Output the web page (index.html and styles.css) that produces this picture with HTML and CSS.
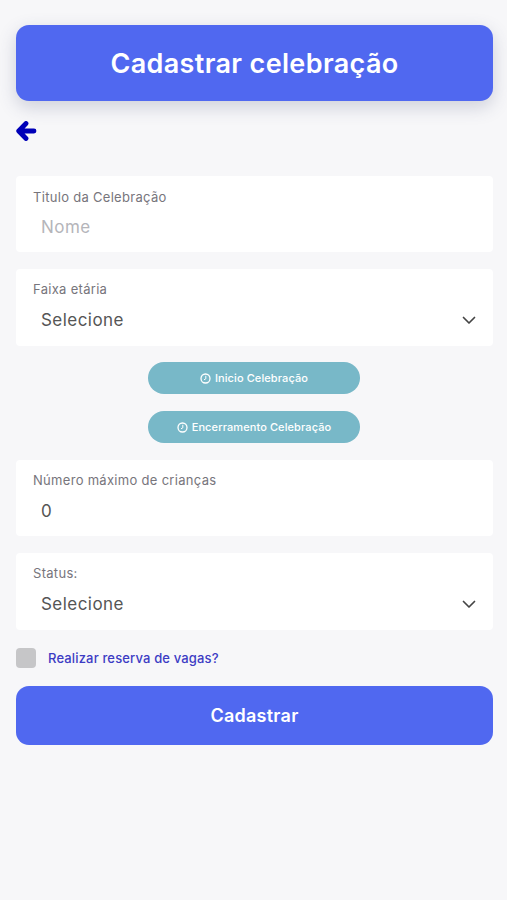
FILE: index.html
```html
<!DOCTYPE html>
<html lang="pt">
<head>
<meta charset="utf-8">
<title>Cadastrar celebração</title>
<link rel="stylesheet" href="styles.css">
</head>
<body>
<main class="page">
  <header class="header"><h1>Cadastrar celebração</h1></header>
  <div class="back">
    <svg width="21" height="20" viewBox="0 0 21 20"><path d="M10 2.500 2.700 10l7.300 7.500M4 10h14" fill="none" stroke="#0000b8" stroke-width="4.800" stroke-linecap="round" stroke-linejoin="round"/></svg>
  </div>
  <section class="field field-first">
    <span class="label">Titulo da Celebração</span>
    <span class="value placeholder">Nome</span>
  </section>
  <section class="field field-tall">
    <span class="label">Faixa etária</span>
    <div class="select"><span class="value">Selecione</span>
      <svg class="chev" width="14" height="9" viewBox="0 0 14 9"><path d="M1.500 1.500 7 7l5.500-5.500" fill="none" stroke="#444" stroke-width="1.700" stroke-linecap="round" stroke-linejoin="round"/></svg>
    </div>
  </section>
  <div class="pills">
    <button class="pill"><svg width="11" height="11" viewBox="0 0 11 11"><circle cx="5.500" cy="5.500" r="4.500" fill="none" stroke="#fff" stroke-width="1.300"/><path d="M5.800 2.800v3L4 6.800" fill="none" stroke="#fff" stroke-width="1"/></svg>Inicio Celebração</button>
    <button class="pill"><svg width="11" height="11" viewBox="0 0 11 11"><circle cx="5.500" cy="5.500" r="4.500" fill="none" stroke="#fff" stroke-width="1.300"/><path d="M5.800 2.800v3L4 6.800" fill="none" stroke="#fff" stroke-width="1"/></svg>Encerramento Celebração</button>
  </div>
  <section class="field">
    <span class="label">Número máximo de crianças</span>
    <span class="value">0</span>
  </section>
  <section class="field field-tall">
    <span class="label">Status:</span>
    <div class="select"><span class="value">Selecione</span>
      <svg class="chev" width="14" height="9" viewBox="0 0 14 9"><path d="M1.500 1.500 7 7l5.500-5.500" fill="none" stroke="#444" stroke-width="1.700" stroke-linecap="round" stroke-linejoin="round"/></svg>
    </div>
  </section>
  <label class="check"><span class="box"></span><span class="check-text">Realizar reserva de vagas?</span></label>
  <button class="submit">Cadastrar</button>
</main>
</body>
</html>
```

FILE: styles.css
```css
* { box-sizing: border-box; }
html, body { margin: 0; height: 100%; }
body {
  background: #f7f7f9;
  font-family: Inter, "Liberation Sans", sans-serif;
  color: #555;
}
.page {
  padding: 25px 14px 0 16px;
  display: flex;
  flex-direction: column;
  min-height: 900px;
}
.header {
  height: 76px;
  background: #5068f0;
  border-radius: 13px;
  box-shadow: 0 6px 18px rgba(60, 70, 110, .22);
  display: flex;
  align-items: center;
  justify-content: center;
}
.header h1 {
  margin: 0;
  color: #fff;
  font-size: 27px;
  font-weight: 600;
  letter-spacing: .35px;
}
.back {
  height: 75px;
  padding-top: 20px;
  display: flex;
  align-items: flex-start;
}
.field {
  height: 76px;
  background: #fff;
  border-radius: 4px;
  padding: 12px 17px 0;
  margin-bottom: 17px;
  display: flex;
  flex-direction: column;
}
.field-first { padding-top: 13px; }
.field-tall { height: 77px; }
.label {
  font-size: 13px;
  line-height: 16px;
  color: #77757c;
  letter-spacing: .3px;
}
.value {
  font-size: 17px;
  line-height: 22px;
  margin: 12px 0 0 8px;
  color: #555;
  letter-spacing: .45px;
}
.field-first .value { margin-top: 11px; }
.placeholder { color: #b5b5ba; }
.select {
  display: flex;
  justify-content: space-between;
  align-items: center;
}
.chev { margin: 13px 0 0 0; }
.pills {
  display: flex;
  flex-direction: column;
  align-items: center;
  gap: 17px;
  margin: -1px 1px 17px 0;
}
.pill {
  width: 212px;
  height: 32px;
  border: 0;
  border-radius: 16px;
  background: #78b8c8;
  color: #fff;
  font: 500 11px Inter, "Liberation Sans", sans-serif;
  letter-spacing: .1px;
  display: flex;
  align-items: center;
  justify-content: center;
  gap: 4px;
  padding: 0;
}
.check {
  display: flex;
  align-items: center;
  gap: 12px;
  margin: 1px 0 18px;
}
.box {
  width: 20px;
  height: 20px;
  background: #c6c6c8;
  border-radius: 4px;
}
.check-text {
  font-size: 13px;
  font-weight: 500;
  color: #3c3cc4;
  letter-spacing: .15px;
}
.submit {
  height: 59px;
  border: 0;
  border-radius: 13px;
  background: #5068f0;
  color: #fff;
  font: 600 18px Inter, "Liberation Sans", sans-serif;
  letter-spacing: .25px;
}
```
